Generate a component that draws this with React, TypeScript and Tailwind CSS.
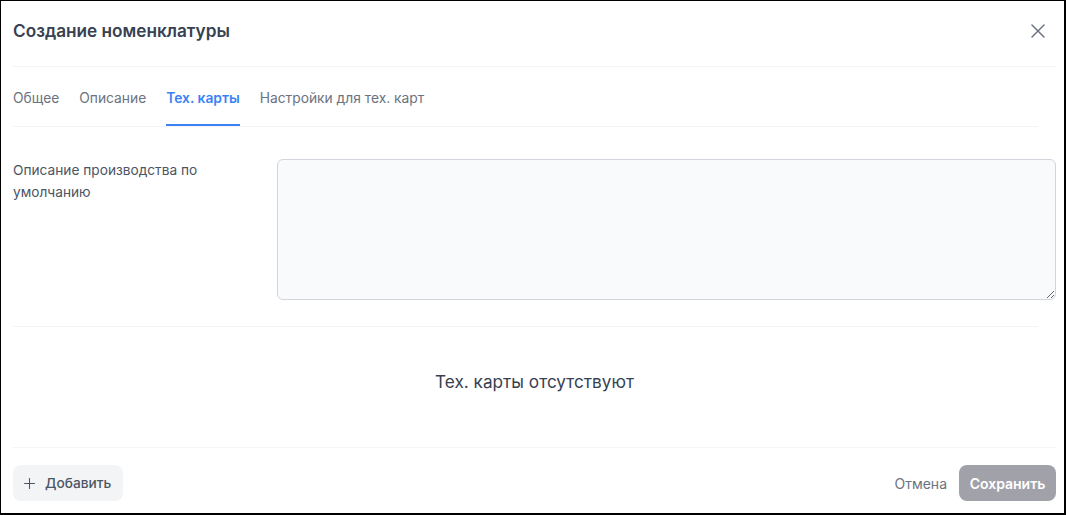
import React from "react";
import { X, Plus } from "lucide-react";

export default function App() {
  const tabs = ["Общее", "Описание", "Тех. карты", "Настройки для тех. карт"];
  return (
    <div
      className="w-[1066px] h-[515px] bg-white border-t border-l border-r-2 border-b-2 border-black flex flex-col pl-3 pr-2 overflow-hidden"
      style={{ fontFamily: "Inter, 'Noto Sans', sans-serif" }}
    >
      {/* Header */}
      <div className="h-[60px] mb-[5px] flex items-center justify-between shrink-0">
        <h1 className="text-[17.2px] font-semibold text-[#374151] leading-[28px]">Создание номенклатуры</h1>
        <button className="w-6 h-6 mr-[6px] flex items-center justify-center text-[#6b7280]">
          <X size={24} strokeWidth={1.5} />
        </button>
      </div>
      <div className="h-px bg-[#f3f4f6] shrink-0" />

      {/* Tabs */}
      <div className="mr-[18px] border-b border-[#f3f4f6] flex gap-5 pt-[21px] shrink-0">
        {tabs.map((t, i) => (
          <div
            key={t}
            className={
              i === 2
                ? "text-[13.8px] leading-[20px] pb-[16px] border-b-2 border-[#3b82f6] text-[#3b82f6] font-semibold"
                : "text-[13.8px] leading-[20px] pb-[16px] border-b-2 border-transparent text-[#6b7280]"
            }
          >
            {t}
          </div>
        ))}
      </div>

      {/* Form row */}
      <div className="grid grid-cols-[252px_1fr] gap-3 pt-[32px] shrink-0">
        <div className="text-[13.7px] leading-[22px] text-[#4b5563]">Описание производства по умолчанию</div>
        <textarea className="h-[141px] w-full rounded-md border border-[#d1d5db] bg-[#f9fafb] outline-none resize-y" />
      </div>

      <div className="h-px bg-[#f3f4f6] mr-[18px] mt-[26px] shrink-0" />

      {/* Empty state */}
      <div className="h-[120px] shrink-0 flex justify-center pt-[43px]">
        <span className="text-[17.2px] leading-[24px] text-[#374151]">Тех. карты отсутствуют</span>
      </div>

      <div className="h-px bg-[#f3f4f6] shrink-0" />

      {/* Footer */}
      <div className="flex items-center justify-between pt-[17px]">
        <button className="h-9 w-[110px] rounded-lg bg-[#f3f4f6] flex items-center gap-[7px] pl-[8px] text-[13.7px] font-medium text-[#4b5563]">
          <Plus size={17} strokeWidth={1.5} />
          Добавить
        </button>
        <div className="flex items-center gap-3">
          <button className="h-9 text-[14px] text-[#6b7280]">Отмена</button>
          <button className="h-9 w-[97px] rounded-lg bg-[#a1a1aa] text-white text-[14px] font-semibold">Сохранить</button>
        </div>
      </div>
    </div>
  );
}
